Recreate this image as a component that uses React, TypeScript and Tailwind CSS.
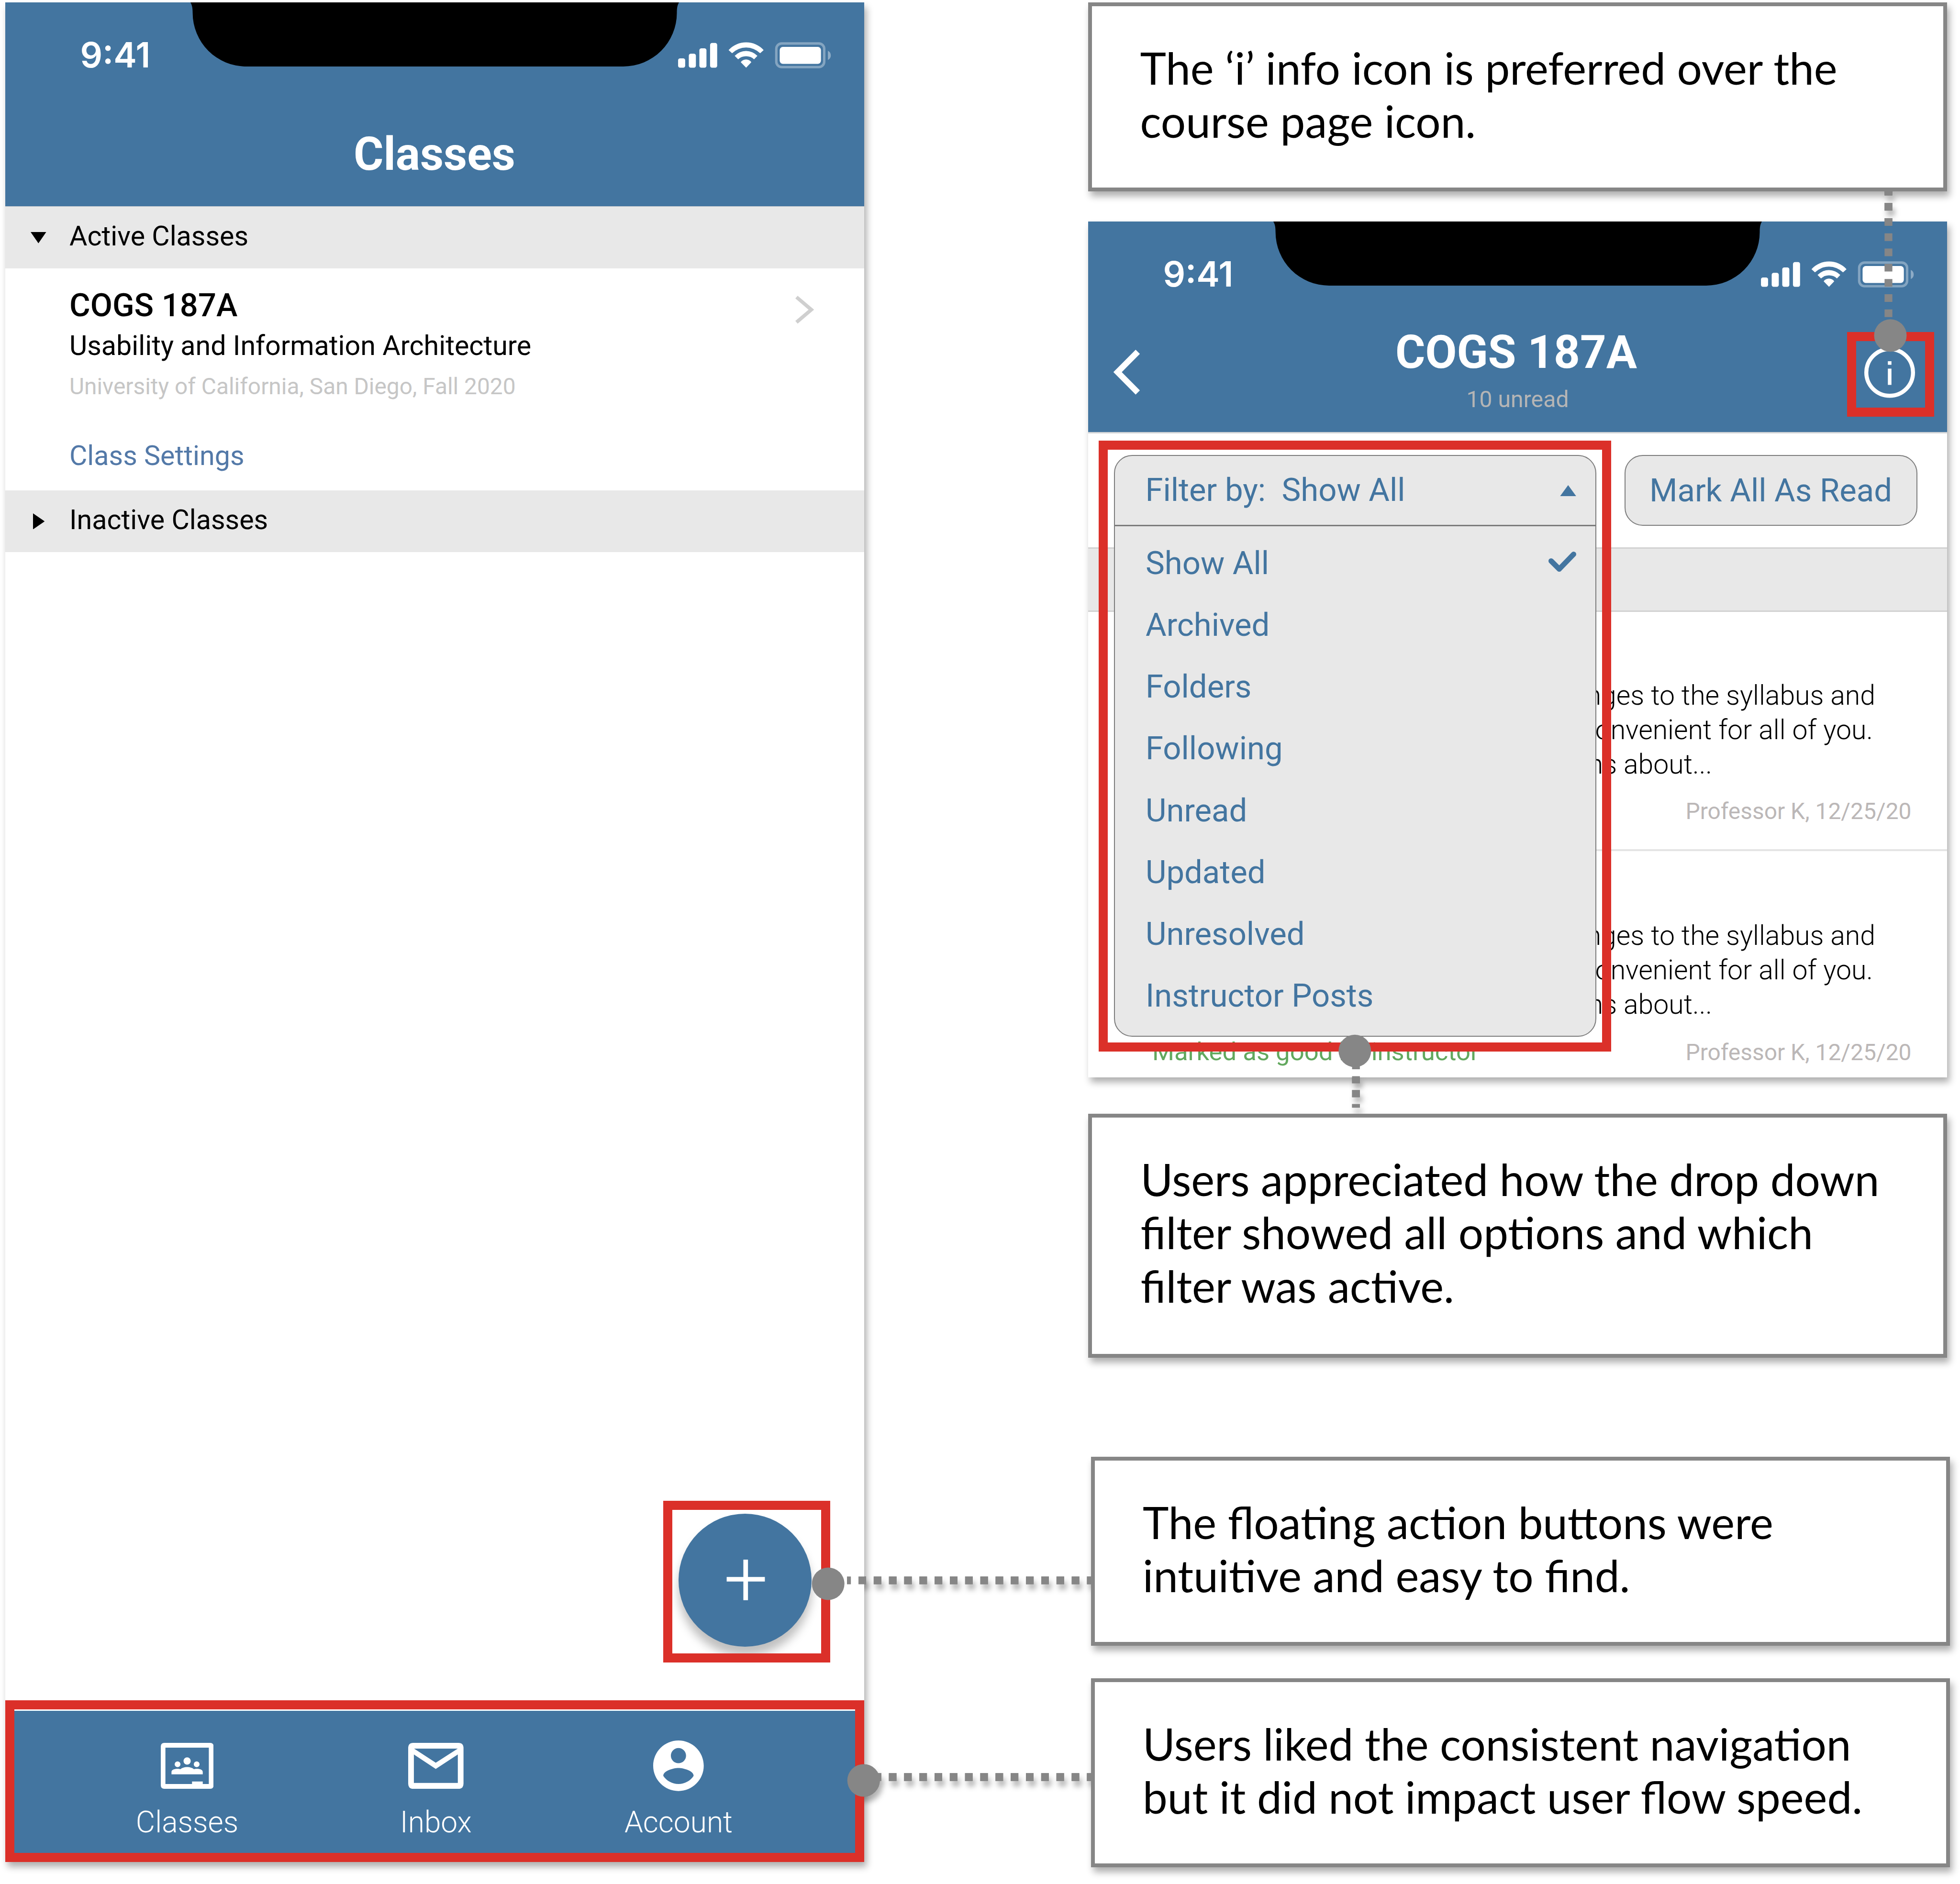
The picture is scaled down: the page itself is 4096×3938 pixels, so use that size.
import type { ReactNode } from "react";

const FILTERS = ["Show All", "Archived", "Folders", "Following", "Unread", "Updated", "Unresolved", "Instructor Posts"];

function StatusBar() {
  return (
    <div className="relative flex h-[134px] justify-between pl-[156.500px]">
      <svg className="absolute left-[387px] top-0" width="1021" height="134" viewBox="387 0 1021 134">
        <path d="M387 0C390.500 6 391.600 12 391.600 22A112 112 0 0 0 503.600 134H1291.500A112 112 0 0 0 1403.500 22C1403.500 12 1404.500 6 1408 0Z" fill="#000" />
      </svg>
      <span className="mt-[73.500px] font-['Inter'] text-[72.9px] font-semibold leading-[72px] text-white">9:41</span>
      <svg className="mr-[65.600px] mt-[79.700px] shrink-0" width="326.800" height="60.500" viewBox="50 280 1080 200" fill="#fff">
        <rect x="60" y="402" width="49" height="65" rx="14" />
        <rect x="134" y="370" width="49" height="97" rx="14" />
        <rect x="207" y="333" width="49" height="134" rx="14" />
        <rect x="281" y="296" width="49" height="171" rx="14" />
        <path strokeLinejoin="round" d="M409 345A163 163 0 0 1 651 345L627 367A138 138 0 0 0 433 367Z" />
        <path d="M451 385A107.600 107.600 0 0 1 608 385L585 409A80 80 0 0 0 475 409Z" />
        <path d="M493 429A44.600 44.600 0 0 1 566 429L530 467Z" />
        <rect x="738.500" y="299.500" width="331" height="163" rx="37" fill="none" stroke="#fff" strokeWidth="17" opacity="0.35" />
        <rect x="762" y="323" width="285" height="117" rx="22" />
        <path d="M1095 350C1109 356 1115 369 1115 382S1109 408 1095 413Z" opacity="0.4" />
      </svg>
    </div>
  );
}

function SectionBar({ open, children }: { open?: boolean; children: ReactNode }) {
  return (
    <div className="flex bg-[#e8e8e8]">
      <div className="w-[134px] shrink-0">
        {open ? (
          <svg className="ml-[53px] mt-[53px]" width="32.600" height="23.500" viewBox="0 0 32 24" preserveAspectRatio="none">
            <path d="M0 0H32L16 24Z" />
          </svg>
        ) : (
          <svg className="ml-[57.600px] mt-[47.700px]" width="24.400" height="33.500" viewBox="0 0 24 32" preserveAspectRatio="none">
            <path d="M0 0V32L24 16Z" />
          </svg>
        )}
      </div>
      <span className="text-[57.4px] leading-[124.5px]">{children}</span>
    </div>
  );
}

function NavItem({ label, children }: { label: string; children: ReactNode }) {
  return (
    <div className="flex w-[300px] flex-col items-center">
      <div className="flex h-[106px] items-center">{children}</div>
      <span className="mt-[29px] text-[62.2px] font-light leading-[72px] text-white">{label}</span>
    </div>
  );
}

function ClassesPhone() {
  return (
    <section className="relative z-10 flex h-[3887px] w-[1795px] shrink-0 flex-col bg-white shadow-[5px_10px_14px_rgba(0,0,0,0.32)]">
      <header className="h-[426px] bg-[#4375a0]">
        <StatusBar />
        <h1 className="mt-[127px] pr-[1px] text-center text-[95.6px] font-bold leading-[112px] text-white">Classes</h1>
      </header>
      <div className="h-[129.500px] border-t border-[#c4c8cc] bg-[#e8e8e8]">
        <SectionBar open>Active Classes</SectionBar>
      </div>
      <div className="flex h-[464.500px] justify-between pl-[134px]">
        <div className="flex flex-col pt-[37.400px]">
          <span className="text-[67px] font-medium leading-[80px]">COGS 187A</span>
          <span className="mt-[5px] text-[57.4px] leading-[80px]">Usability and Information Architecture</span>
          <span className="mt-[5px] text-[47.85px] leading-[80px] text-[#c6c6c6]">University of California, San Diego, Fall 2020</span>
          <span className="mt-[65px] text-[57.4px] leading-[80px] text-[#5379a8]">Class Settings</span>
        </div>
        <svg className="mr-[100px] mt-[56px]" width="46" height="61" viewBox="1649 56 46 61" fill="none" stroke="#cfcfcf" strokeWidth="7.500">
          <path d="M1653.500 60L1684.500 86.300L1653.500 112.600" />
        </svg>
      </div>
      <div className="h-[129px] bg-[#e8e8e8]">
        <SectionBar>Inactive Classes</SectionBar>
      </div>
      <div className="grow" />
      <nav className="h-[338px] border-[19px] border-[#db3029] bg-white pt-[3px]">
        <div className="flex h-full bg-[#4375a0] pl-[211px] pt-[62px]">
          <NavItem label="Classes">
            <svg width="110.400" height="96" viewBox="211 68 365 317" fill="#fff">
              <path fillRule="evenodd" d="M236 68H551Q576 68 576 93V360Q576 385 551 385H236Q211 385 211 360V93Q211 68 236 68ZM243 101V352H427V335H501V352H543V101Z" />
              <circle cx="393" cy="193" r="25" />
              <circle cx="327" cy="216" r="20" />
              <circle cx="459" cy="216" r="20" />
              <path d="M285 285V268C285 252 310 247 327 247C335 247 342 248 347 250C358 240 375 235 393 235C411 235 429 240 440 250C445 248 452 247 459 247C478 247 501 252 501 268V285Z" />
            </svg>
          </NavItem>
          <div className="w-[220px]" />
          <NavItem label="Inbox">
            <svg width="115.700" height="96.200" viewBox="939.400 4012.700 127.400 106" fill="#fff">
              <path fillRule="evenodd" d="M951 4012.700H1055Q1066.800 4012.700 1066.800 4025V4106.500Q1066.800 4118.700 1055 4118.700H951Q939.400 4118.700 939.400 4106.500V4025Q939.400 4012.700 951 4012.700ZM953 4026L1002.900 4058.500L1053.500 4026ZM952.500 4039.500V4105H1053.700V4039.500L1002.900 4072.700Z" />
            </svg>
          </NavItem>
          <div className="w-[207px]" />
          <NavItem label="Account">
            <svg width="105.700" height="105.700" viewBox="2 2 20 20" fill="#fff">
              <path d="M12 2C6.480 2 2 6.480 2 12s4.480 10 10 10 10-4.480 10-10S17.520 2 12 2zm0 3c1.660 0 3 1.340 3 3s-1.340 3-3 3-3-1.340-3-3 1.340-3 3-3zm0 14.200c-2.500 0-4.710-1.280-6-3.220.030-1.990 4-3.080 6-3.080 1.990 0 5.970 1.090 6 3.080-1.290 1.940-3.500 3.220-6 3.220z" />
            </svg>
          </NavItem>
        </div>
      </nav>
      <button className="absolute left-[1407px] top-[3159px] size-[278px] rounded-full bg-[#4375a0] shadow-[0_19px_19px_rgba(0,0,0,0.25)]">
        <svg width="278" height="278" viewBox="0 0 278 278" fill="none" stroke="#fff" strokeWidth="9.700">
          <path d="M140.300 96V180.700M100.600 137H180.400" />
        </svg>
      </button>
    </section>
  );
}

function Message({ good }: { good?: boolean }) {
  return (
    <div className="pt-[139px]">
      <div className="text-right text-[57.1px] font-light leading-[71.8px]">
        <p className="pr-[150px]">some changes to the syllabus and</p>
        <p className="pr-[155px]">more convenient for all of you.</p>
        <p className="pr-[491px]">any questions about...</p>
      </div>
      <div className="mt-[32.300px] flex items-baseline justify-between pl-[134px] pr-[74.500px] leading-[60px]">
        <span className="text-[52.65px] text-[#62a85e]">{good ? "Marked as good by instructor" : ""}</span>
        <span className="text-[47.9px] text-[#bbb7b7]">Professor K, 12/25/20</span>
      </div>
    </div>
  );
}

function FilterMenu() {
  return (
    <div className="absolute left-[54px] top-[488px] h-[1216px] w-[1008px] rounded-[38px] border-[2.500px] border-[#7c7c7c] bg-[#e8e8e8] text-[67px] text-[#4375a0]">
      <div className="flex h-[147px] justify-between border-b-[3px] border-[#7c7c7c] pl-[63.500px] pr-[40px] leading-[142px]">
        <span className="flex">
          <span className="w-[285px]">Filter by:</span>
          <span>Show All</span>
        </span>
        <svg className="mt-[60.500px]" width="34.200" height="23.500" viewBox="0 0 34 24" preserveAspectRatio="none">
          <path d="M0 24H34L17 0Z" fill="#4375a0" />
        </svg>
      </div>
      <ul className="pl-[64px] pr-[40px] pt-[13px] leading-[129.14px]">
        {FILTERS.map((name, i) => (
          <li key={name} className="flex justify-between">
            {name}
            {i === 0 && (
              <svg className="mt-[40px]" width="58" height="43" viewBox="0 0 58 43" fill="none" stroke="#4375a0" strokeWidth="11" strokeLinecap="round" strokeLinejoin="round">
                <path d="M5.500 19.500L22.500 36.500L52.500 5.500" />
              </svg>
            )}
          </li>
        ))}
      </ul>
    </div>
  );
}

function FeedPhone() {
  return (
    <section className="relative z-10 mt-[63px] h-[1789px] w-[1795px] shrink-0 bg-white shadow-[5px_10px_14px_rgba(0,0,0,0.32)]">
      <header className="relative h-[440px] bg-[#4375a0] text-center">
        <StatusBar />
        <h1 className="mt-[83px] pr-[6px] text-[95.6px] font-bold leading-[112px] text-white">COGS 187A</h1>
        <p className="mt-[12.500px] text-[48.200px] leading-[60px] text-[#b5b5b5]">10 unread</p>
        <svg className="absolute left-[49px] top-[262px]" width="64" height="106" viewBox="50 262 64 106" fill="none" stroke="#fff" strokeWidth="12.400">
          <path d="M104.700 272.300L62.500 314.800L104.700 357.300" />
        </svg>
        <svg className="absolute left-[1622px] top-[262px]" width="106" height="107" viewBox="0 0 106 107" fill="none" stroke="#fff">
          <circle cx="53" cy="53.500" r="48.800" strokeWidth="8.400" />
          <path d="M53 30V37.500M53 45.500V79.500" strokeWidth="7.500" />
        </svg>
      </header>
      <div className="flex h-[241px] items-start justify-end border-t-[3px] border-[#d4d6d8] pr-[62.500px] pt-[45px]">
        <button className="h-[148px] w-[612px] rounded-[38px] border-[2.500px] border-[#7c7c7c] bg-[#e8e8e8] pb-[1px] text-[67px] leading-[142px] text-[#4375a0]">
          Mark All As Read
        </button>
      </div>
      <div className="h-[135px] border-y-[3px] border-[#d2d2d2] bg-[#e8e8e8]" />
      <Message />
      <div className="mb-[2px] ml-[134px] mt-[49px] h-[4.500px] bg-[#e4e4e4]" />
      <Message good />
      <FilterMenu />
    </section>
  );
}

function Callout({ className, children }: { className: string; children: ReactNode }) {
  return (
    <div className={`relative z-10 w-[1795px] shrink-0 border-[8px] border-[#868686] bg-white pt-[72.500px] font-['Lato'] text-[92.4px] leading-[111.8px] shadow-[5px_10px_14px_rgba(0,0,0,0.32)] ${className}`}>
      {children}
    </div>
  );
}

/* Dotted leader lines with their round pins; drawn once below the panels for the shadow and once above them. */
function Leaders({ className }: { className: string }) {
  return (
    <svg className={`pointer-events-none absolute left-0 top-0 ${className}`} width="4096" height="3938" viewBox="0 0 4096 3938" fill="#868686" stroke="none">
      <g stroke="#868686" strokeWidth="16.300">
        <path d="M3946.500 400V700" strokeDasharray="16 15.800" strokeDashoffset="7.600" />
        <path d="M2833.700 2220.200V2315.300" strokeDasharray="14.800 14.400" />
        <path d="M1770 3303.400H2281" strokeDasharray="16 15.830" strokeDashoffset="7.800" />
        <path d="M1825.700 3714.500H2281" strokeDasharray="16 15.830" />
      </g>
      <circle cx="3950.500" cy="701.300" r="34" />
      <circle cx="2831.300" cy="2196.700" r="34" />
      <circle cx="1730.700" cy="3310.400" r="34" />
      <circle cx="1804.700" cy="3721.500" r="34" />
    </svg>
  );
}

export default function App() {
  return (
    <main className="relative flex h-[3938px] w-[4096px] overflow-hidden bg-white pl-[11px] pt-[5px] font-['Roboto',sans-serif] text-black">
      <Leaders className="z-0 drop-shadow-[5px_11px_6px_rgba(0,0,0,0.3)]" />
      <ClassesPhone />
      <div className="ml-[468px] flex flex-col">
        <Callout className="h-[395px] pl-[100.5px]">
          The ‘i’ info icon is preferred over the
          <br />
          course page icon.
        </Callout>
        <FeedPhone />
        <Callout className="mt-[76px] h-[510px] pl-[101.5px]">
          Users appreciated how the drop down
          <br />
          filter showed all options and which
          <br />
          filter was active.
        </Callout>
        <Callout className="ml-[6px] mt-[207px] h-[395px] pl-[100px]">
          The floating action buttons were
          <br />
          intuitive and easy to find.
        </Callout>
        <Callout className="ml-[6px] mt-[68px] h-[395px] pl-[100px]">
          Users liked the consistent navigation
          <br />
          but it did not impact user flow speed.
        </Callout>
      </div>
      <div className="absolute left-[3859.500px] top-[694px] z-20 h-[177px] w-[182px] border-[19px] border-[#db3029]" />
      <div className="absolute left-[2296px] top-[920.500px] z-20 h-[1277px] w-[1070.500px] border-[19px] border-[#db3029]" />
      <div className="absolute left-[1386px] top-[3137px] z-20 h-[338px] w-[349px] border-[19px] border-[#db3029]" />
      <Leaders className="z-30" />
    </main>
  );
}
